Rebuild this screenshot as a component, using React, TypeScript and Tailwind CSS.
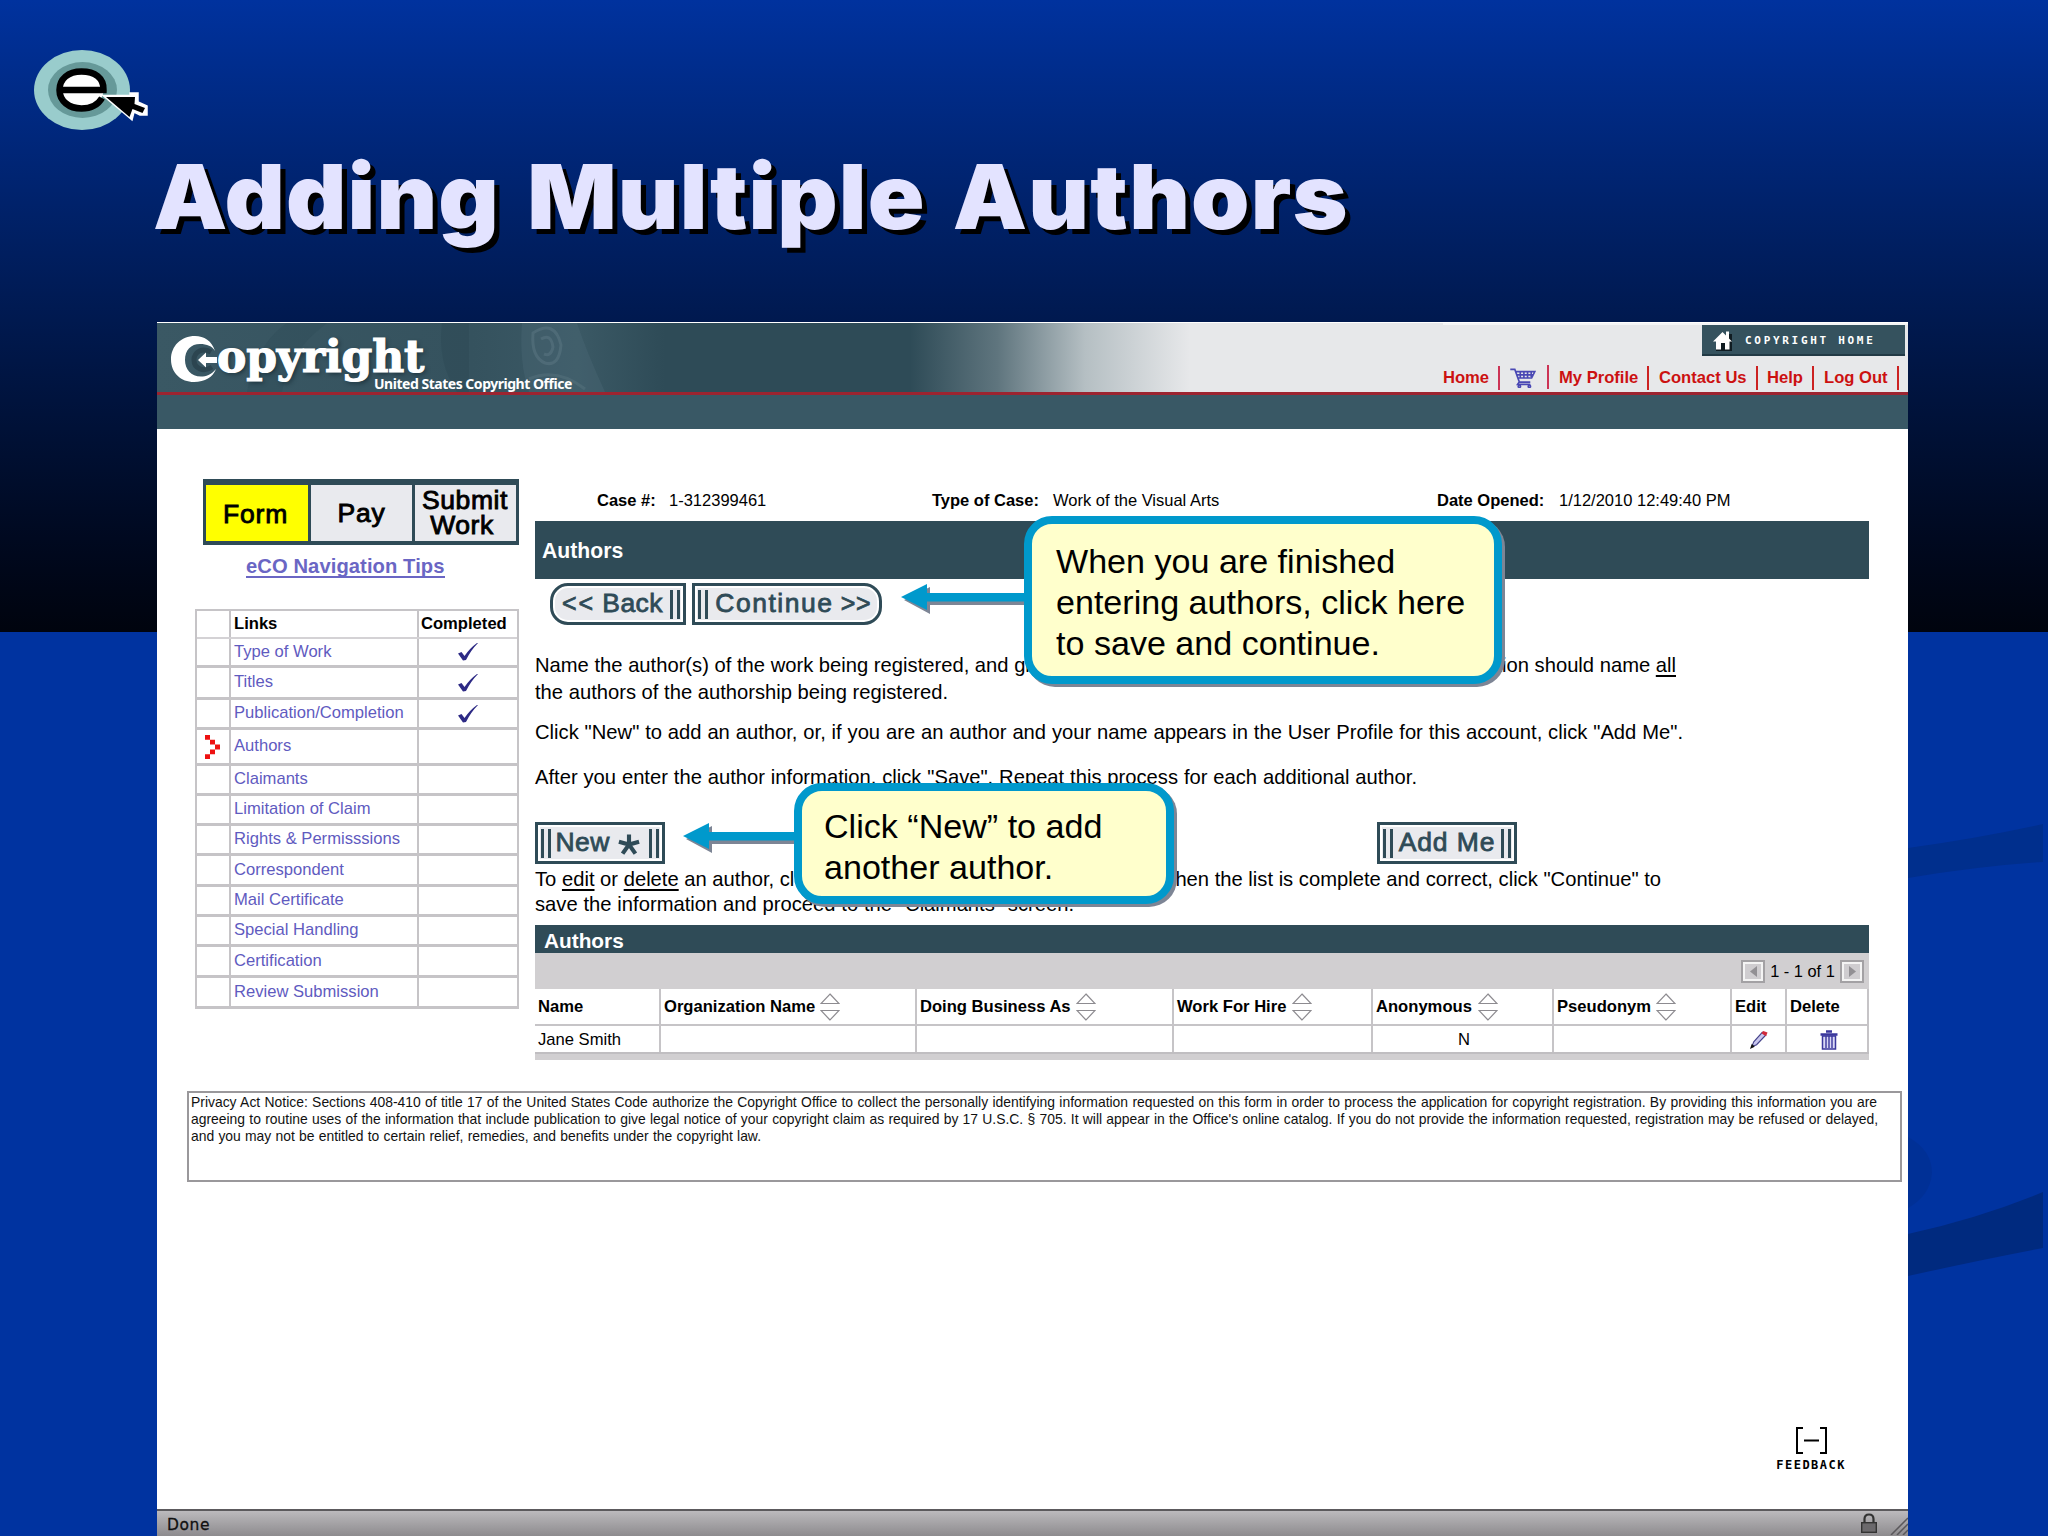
import type { ReactNode } from 'react'

const links = [
  { label: 'Type of Work', done: true, height: 'h-[29px]' },
  { label: 'Titles', done: true, height: 'h-[32px]' },
  { label: 'Publication/Completion', done: true, height: 'h-[30px]' },
  { label: 'Authors', current: true, height: 'h-[36px]' },
  { label: 'Claimants', height: 'h-[30px]' },
  { label: 'Limitation of Claim', height: 'h-[30px]' },
  { label: 'Rights & Permisssions', height: 'h-[30px]' },
  { label: 'Correspondent', height: 'h-[31px]' },
  { label: 'Mail Certificate', height: 'h-[30px]' },
  { label: 'Special Handling', height: 'h-[30px]' },
  { label: 'Certification', height: 'h-[31px]' },
  { label: 'Review Submission', height: 'h-[31px]' },
]

const columns = [
  { label: 'Name', width: 'w-[126px]', text: 'w-[44px]', value: 'Jane Smith' },
  { label: 'Organization Name', width: 'w-[256px]', text: 'w-[151px]', sortable: true },
  { label: 'Doing Business As', width: 'w-[257px]', text: 'w-[151px]', sortable: true },
  { label: 'Work For Hire', width: 'w-[199px]', text: 'w-[110px]', sortable: true },
  { label: 'Anonymous', width: 'w-[181px]', text: 'w-[97px]', sortable: true, value: 'N', center: true },
  { label: 'Pseudonym', width: 'w-[178px]', text: 'w-[94px]', sortable: true },
  { label: 'Edit', width: 'w-[55px]', text: 'w-[32px]', icon: 'edit' },
  { label: 'Delete', width: 'w-[82px]', text: 'w-[51px]', icon: 'delete' },
]

function Backdrop() {
  return (
    <svg className="absolute inset-0 h-full w-full" viewBox="0 0 2048 1536">
      <path d="M1908 848 Q1980 838 2043 824 V862 Q1980 866 1908 878Z" fill="#002f8d" />
      <path d="M1908 1137 Q1932 1150 1932 1173 Q1930 1196 1908 1208Z" fill="#003096" />
      <path d="M1908 1234 Q1980 1218 2043 1192 V1248 Q1980 1260 1908 1276Z" fill="#002a7f" />
    </svg>
  )
}

function EcoLogo() {
  return (
    <svg className="absolute top-[46px] left-[30px] h-[88px] w-[124px]" viewBox="30 46 124 88">
      <ellipse cx="82" cy="90" rx="48" ry="40" fill="#99cccc" />
      <ellipse cx="82.500" cy="90" rx="34.500" ry="28" fill="#669999" />
      <ellipse cx="81.500" cy="90" rx="22" ry="18.500" fill="#fff" />
      <path d="M60 90 H103.500 C104 78 95 71.500 81.500 71.500 C68 71.500 59.500 79 59.500 90 C59.500 101 69 108.500 81.500 108.500 C91 108.500 98 105 102 98" fill="none" stroke="#000" strokeWidth="6.500" />
      <path d="M103 95.500 L130 95.500 V93 H138 V102 L147 106 V115 H140 L134 112 L132 120 L125 114Z" fill="#fff" stroke="#fff" strokeWidth="1.500" />
      <path d="M106 97 H135 L134.500 104 L145 108 L142.500 113 L132.500 109 L129.500 117Z" fill="#000" />
    </svg>
  )
}

function HeaderPhoto() {
  return (
    <svg className="absolute top-0 left-0 h-[69px] w-[460px]" viewBox="0 0 460 69" fill="none">
      <path d="M90 69 Q100 20 130 0 H170 Q130 30 125 69Z" fill="#2f4d59" opacity="0.500" />
      <path d="M285 0 H312 V69 H300 Q280 40 285 0Z" fill="#2f4b57" opacity="0.600" />
      <path d="M365 0 H420 Q430 30 448 69 H372 Q362 40 365 0Z" fill="#4a6773" opacity="0.450" />
      <path d="M376 10 Q398 -4 404 22 Q402 44 388 40 Q374 34 376 10Z M384 16 Q394 10 396 24 Q394 34 387 31" stroke="#5c7883" strokeWidth="3" opacity="0.500" />
      <path d="M372 56 Q400 44 428 66" stroke="#5c7883" strokeWidth="3" opacity="0.400" />
    </svg>
  )
}

function CopyrightMark() {
  return (
    <div className="relative flex h-[69px] w-[500px] flex-col">
      <HeaderPhoto />
      <div className="relative flex h-[52px] items-start pl-[13px]">
        <svg className="mt-[12px] h-[50px] w-[50px] shrink-0" viewBox="0 0 50 50">
          <path d="M45 16 C42 6 34 1 25 1 C11 1 1 11 1 24.500 C1 38 11 47 24 47 C35 47 43 42 46 34 C41 40 36 41.500 31 41.500 C21 41.500 15 34 15 25 C15 15 21 9 30 9 C37 9 42 11 45 16Z" fill="#fff" />
          <path d="M41 17 C32 12 24 17 24 25 C24 33 33 38 42 32" fill="none" stroke="#2c4550" strokeWidth="5" />
          <path d="M28 25 L36 17.500 V22 H47 V28 H36 V32.500Z" fill="#fff" />
        </svg>
        <span className="-ml-[3px] pt-[2px] font-['DejaVu_Serif'] text-[44px] leading-[64px] font-bold tracking-[-0.2px] text-white [-webkit-text-stroke:1.2px_#fff] [text-shadow:2px_2px_4px_#1d333d]">
          opyright
        </span>
      </div>
      <span className="relative pl-[217px] font-['Noto_Sans'] text-[14px] leading-[17px] font-bold tracking-[-0.48px] whitespace-nowrap text-white">
        United States Copyright Office
      </span>
    </div>
  )
}

function Cart() {
  return (
    <svg className="h-[20px] w-[26px]" viewBox="0 0 28 22" fill="none" stroke="#4a48b4" strokeWidth="1.800">
      <path d="M0 1.500 H5 L10 15.500 H22 M6 4 H27 L23.500 11 H9 M7 7.500 H25 M11 4 V11 M15 4 V11 M19 4 V11 M23 4 V10 M10 15 L8 18 H22" />
      <circle cx="10" cy="20" r="1.300" />
      <circle cx="21" cy="20" r="1.300" />
    </svg>
  )
}

function Header() {
  return (
    <header>
      <div className="flex h-[69px] justify-between bg-[linear-gradient(90deg,#3a5864_0%,#35525e_18%,#3b5965_24%,#2e4b57_29%,#2e4b57_43%,#5f757e_48%,#b5bfc3_53%,#e7e8ea_59%)]">
        <CopyrightMark />
        <div className="flex flex-col items-end border-t-2 border-[#f4f5f6] pr-[3px]">
          <div className="flex h-[31px] w-[203px] items-center border-b-2 border-[#223a45] bg-[#35525e] pt-[2px] pl-[10px]">
            <svg className="h-[22px] w-[22px]" viewBox="0 0 22 22">
              <path d="M4 12 V21 H20 V4 H16 V6" fill="#101c22" />
              <path d="M1 11.500 L10.500 2 L14 5.500 V1.500 H17 V8.500 L20 11.500 H17.500 V19.500 H13 V13 H9 V19.500 H4 V11.500Z" fill="#fff" />
            </svg>
            <span className="pt-px pl-[11px] font-['DejaVu_Sans_Mono'] text-[11px] font-bold tracking-[2.7px] whitespace-nowrap text-white">
              COPYRIGHT HOME
            </span>
          </div>
          <nav className="flex h-[36px] items-center pt-[8px] pr-[6px] text-[16.600px] font-bold whitespace-nowrap text-[#cc1111]">
            <span className="w-[55px]">Home</span>
            <span className="h-[24px] w-[2px] bg-[#cc3355]" />
            <span className="w-[47px] pl-[10px]"><Cart /></span>
            <span className="mb-[3px] h-[24px] w-[2px] bg-[#cc3355]" />
            <span className="w-[98px] pl-[10px]">My Profile</span>
            <span className="h-[24px] w-[2px] bg-[#cc2222]" />
            <span className="w-[107px] pl-[10px]">Contact Us</span>
            <span className="h-[24px] w-[2px] bg-[#cc2222]" />
            <span className="w-[54px] pl-[9px]">Help</span>
            <span className="h-[24px] w-[2px] bg-[#cc2222]" />
            <span className="w-[83px] pl-[10px]">Log Out</span>
            <span className="h-[24px] w-[2px] bg-[#cc2222]" />
          </nav>
        </div>
      </div>
      <div className="h-[37px] border-t-[3px] border-[#9c2430] bg-[#395865]" />
    </header>
  )
}

function Sidebar() {
  return (
    <aside className="w-[348px] shrink-0 pt-[50px] pl-[38px]">
      <div className="ml-[8px] flex h-[66px] w-[316px] gap-[3px] border-x-[3px] border-t-[6px] border-b-[4px] border-[#2f4b57] bg-[#2f4b57] text-[26.500px] text-black [-webkit-text-stroke:0.9px_#000]">
        <div className="flex w-[102px] items-center justify-center bg-[#ffff00] pt-[4px] pr-[3px] tracking-[0.8px]">Form</div>
        <div className="flex w-[101px] items-center justify-center bg-[#e9eaee] pt-[2px] tracking-[0.8px]">Pay</div>
        <div className="flex flex-1 flex-col items-center bg-[#e9eaee] pt-[3px] leading-[25px]">
          <span className="pr-px tracking-[0.6px]">Submit</span>
          <span className="pr-[7px] tracking-[0.6px]">Work</span>
        </div>
      </div>
      <div className="flex h-[64px] items-start pt-[11px] pl-[51px]">
        <a className="border-b-2 border-[#6a66c4] text-[20.200px] leading-[20px] font-bold tracking-[0.080px] whitespace-nowrap text-[#6a66c4]">
          eCO Navigation Tips
        </a>
      </div>
      <div className="w-[324px] border-x-2 border-t-2 border-[#c6c4c7] text-[16.600px]">
        <div className="flex h-[28px] border-b-2 border-[#d4d2d5] font-bold">
          <div className="w-[34px] border-r-2 border-[#c6c4c7]" />
          <div className="flex w-[188px] items-center border-r-2 border-[#c6c4c7] pl-[3px]">Links</div>
          <div className="flex items-center pl-[2px]">Completed</div>
        </div>
        {links.map((link) => (
          <div key={link.label} className={`flex border-b-[3px] border-[#c6c4c7] ${link.height}`}>
            <div className="flex w-[34px] items-center border-r-2 border-[#c6c4c7] pl-[8px]">
              {link.current && (
                <svg className="h-[24px] w-[15px]" viewBox="0 0 15 24" fill="#ee1111">
                  <path d="M0 0H5V4.800H0ZM5 4.800H10V9.600H5ZM10 9.600H15V14.400H10ZM5 14.400H10V19.200H5ZM0 19.200H5V24H0Z" />
                </svg>
              )}
            </div>
            <div className="flex w-[188px] items-center border-r-2 border-[#c6c4c7] pl-[3px] whitespace-nowrap text-[#5f5bbf]">
              {link.label}
            </div>
            <div className="flex flex-1 items-center justify-center">
              {link.done && (
                <svg className="h-[18px] w-[20px]" viewBox="0 0 20 18">
                  <path d="M0 10.500 L3.500 9 L6.500 13 Q12 5 19 0 H20 Q13 7 8 17 L5 17.500Z" fill="#2d2a85" />
                </svg>
              )}
            </div>
          </div>
        ))}
      </div>
    </aside>
  )
}

function Bars() {
  return <span className="h-[29px] w-[10px] shrink-0 border-x-[3px] border-[#2f4b57]" />
}

function ImageButton({ className, children }: { className: string; children: ReactNode }) {
  return (
    <button
      className={`flex h-[42px] items-center border-[3px] border-[#2f4b57] bg-[#e9eaee] text-[26.500px] whitespace-nowrap text-[#2f4b57] shadow-[inset_0_0_0_2px_#fff] [-webkit-text-stroke:0.8px_#2f4b57] ${className}`}
    >
      {children}
    </button>
  )
}

function Sorter() {
  return (
    <svg className="ml-[5px] h-[28px] w-[20px] shrink-0" viewBox="0 0 20 28" fill="#fff" stroke="#8d8b90" strokeWidth="1.200">
      <path d="M10 1 L19 10.500 H1Z M10 27 L1 17.500 H19Z" />
    </svg>
  )
}

function Pencil() {
  return (
    <svg className="mr-[3px] h-[20px] w-[19px]" viewBox="0 0 20 20">
      <path d="M3 17 L5 12 L14 2 L17.500 5 L8 15Z" fill="#c9c7ee" stroke="#45438a" strokeWidth="1.200" />
      <path d="M13 3 L15 0.500 L19.500 2 L18 6Z" fill="#d22a3a" />
      <path d="M1 19.500 L3 14 L6 17Z" fill="#111" />
    </svg>
  )
}

function Trash() {
  return (
    <svg className="h-[20px] w-[18px]" viewBox="0 0 18 20">
      <path d="M6 1.500 H12 M0.500 4.500 H17.500" stroke="#3a379c" strokeWidth="2.500" />
      <path d="M2.500 6 H15.500 V19 H2.500Z" fill="#d9d8f5" stroke="#3a379c" strokeWidth="1.500" />
      <path d="M6 6 V18 M9 6 V18 M12 6 V18" stroke="#3a379c" strokeWidth="1.400" />
    </svg>
  )
}

function Pager() {
  return (
    <div className="flex h-[36px] items-center justify-end bg-[#d1cfd1] pt-px pr-[5px]">
      <span className="flex h-[23px] w-[24px] items-center justify-center border-2 border-[#a3a1a4] bg-[#cfcdd0] shadow-[inset_0_0_0_2px_#f4f4f4]">
        <svg className="h-[11px] w-[7px]" viewBox="0 0 7 11"><path d="M7 0V11L0 5.500Z" fill="#929094" /></svg>
      </span>
      <span className="w-[75px] text-center text-[16.400px]">1 - 1 of 1</span>
      <span className="flex h-[23px] w-[24px] items-center justify-center border-2 border-[#a3a1a4] bg-[#cfcdd0] shadow-[inset_0_0_0_2px_#f4f4f4]">
        <svg className="h-[11px] w-[7px]" viewBox="0 0 7 11"><path d="M0 0V11L7 5.500Z" fill="#929094" /></svg>
      </span>
    </div>
  )
}

function AuthorsTable() {
  return (
    <section className="mt-[8px] h-[135px] bg-[#d1cfd1]">
      <div className="h-[28px] bg-[#2f4b57] pt-px pl-[9px] text-[20.800px] leading-[30px] font-bold text-white">Authors</div>
      <Pager />
      <div className="flex h-[37px] border-b-2 border-[#c6c4c7] bg-white text-[16.600px] font-bold">
        {columns.map((col) => (
          <div key={col.label} className={`flex shrink-0 items-center border-r-2 border-[#c6c4c7] pl-[3px] ${col.width}`}>
            <span className={`pt-[2px] whitespace-nowrap ${col.text}`}>{col.label}</span>
            {col.sortable && <Sorter />}
          </div>
        ))}
      </div>
      <div className="flex h-[28px] border-b-2 border-[#c0bec1] bg-white text-[16.600px]">
        {columns.map((col) => (
          <div
            key={col.label}
            className={`flex shrink-0 items-center border-r-2 border-[#c6c4c7] pt-[2px] pl-[3px] ${col.width} ${col.center || col.icon ? 'justify-center' : ''}`}
          >
            {col.value}
            {col.icon === 'edit' && <Pencil />}
            {col.icon === 'delete' && <Trash />}
          </div>
        ))}
      </div>
    </section>
  )
}

function Callout({ className, children }: { className: string; children: ReactNode }) {
  return (
    <div
      className={`absolute rounded-[28px] border-[8px] border-[#0099cc] bg-[#ffffcc] text-[34.100px] leading-[40.800px] whitespace-nowrap text-black shadow-[3px_3px_0_#7d8595] ${className}`}
    >
      {children}
    </div>
  )
}

function Arrow({ className }: { className: string }) {
  return (
    <svg className={`absolute h-[32px] w-[130px] ${className}`} viewBox="0 0 130 32">
      <path d="M3 16 L29 3 V12 H130 V21 H29 V30Z" fill="#7d8595" />
      <path d="M0 13 L26 0 V9 H130 V17.500 H26 V26Z" fill="#0099cc" />
    </svg>
  )
}

function Main() {
  return (
    <main className="w-[1334px] pt-[51px] text-black">
      <div className="flex h-[41px] items-center pl-[62px] text-[16.500px] whitespace-nowrap">
        <b className="w-[72px]">Case #:</b>
        <span className="w-[263px]">1-312399461</span>
        <b className="w-[121px]">Type of Case:</b>
        <span className="w-[384px]">Work of the Visual Arts</span>
        <b className="w-[122px]">Date Opened:</b>
        <span>1/12/2010 12:49:40 PM</span>
      </div>
      <h2 className="flex h-[58px] items-center bg-[#2f4b57] pt-[2px] pl-[7px] text-[21.200px] font-bold text-white">Authors</h2>
      <div className="flex gap-[6px] pt-[4px] pl-[15px]">
        <ImageButton className="w-[136px] justify-between rounded-l-[18px] pr-[3px] pl-[9px]">
          <span className="text-[25px] tracking-[2px]">&lt;&lt;</span>
          <span className="tracking-[0.4px]">Back</span>
          <Bars />
        </ImageButton>
        <ImageButton className="w-[190px] justify-between rounded-r-[18px] pr-[8px] pl-[3px]">
          <Bars />
          <span className="tracking-[1.5px]">Continue</span>
          <span className="text-[25px] tracking-[0.5px]">&gt;&gt;</span>
        </ImageButton>
      </div>
      <div className="pt-[27px] text-[20.200px] leading-[27px] whitespace-nowrap">
        <div className="flex w-[1141px] justify-between">
          <span>Name the author(s) of the work being registered, and gi</span>
          <span>tion should name <u className="underline-offset-[3px]">all</u></span>
        </div>
        <p>the authors of the authorship being registered.</p>
        <p className="w-[1148px] pt-[13px] [text-align-last:justify]">
          Click "New" to add an author, or, if you are an author and your name appears in the User Profile for this account, click "Add Me".
        </p>
        <p className="w-[882px] pt-[18px] [text-align-last:justify]">
          After you enter the author information, click "Save". Repeat this process for each additional author.
        </p>
      </div>
      <div className="flex pt-[31px]">
        <ImageButton className="w-[130px] justify-between px-[3px]">
          <Bars />
          <span className="-ml-[4px] tracking-[0.5px]">New</span>
          <svg className="mt-[2px] h-[21px] w-[22px]" viewBox="0 0 24 22" stroke="#2f4b57" strokeWidth="4.500">
            <path d="M12 0V11M1 8L12 11L23 8M5 21L12 11L19 21" fill="none" />
          </svg>
          <Bars />
        </ImageButton>
        <ImageButton className="ml-[712px] w-[140px] justify-between px-[3px]">
          <Bars />
          <span className="tracking-[0.9px]">Add Me</span>
          <Bars />
        </ImageButton>
      </div>
      <div className="pt-[3px] text-[20.200px] leading-[25px] whitespace-nowrap">
        <div className="flex w-[1126px] justify-between">
          <span>To <u className="underline-offset-[3px]">edit</u> or <u className="underline-offset-[3px]">delete</u> an author, cl</span>
          <span>hen the list is complete and correct, click "Continue" to</span>
        </div>
        <p className="w-[539px] [text-align-last:justify]">save the information and proceed to the "Claimants" screen.</p>
      </div>
      <AuthorsTable />
    </main>
  )
}

function PrivacyNotice() {
  return (
    <div className="mt-[31px] ml-[30px] h-[91px] w-[1715px] border-2 border-[#9a989b] pt-px pl-[2px] text-[13.900px] leading-[17.200px] whitespace-nowrap text-[#111]">
      <p className="w-[1686px] [text-align-last:justify]">
        Privacy Act Notice: Sections 408-410 of title 17 of the United States Code authorize the Copyright Office to collect the personally identifying information requested on this form in order to process the application for copyright registration. By providing this information you are
      </p>
      <p className="w-[1687px] [text-align-last:justify]">
        agreeing to routine uses of the information that include publication to give legal notice of your copyright claim as required by 17 U.S.C. § 705. It will appear in the Office's online catalog. If you do not provide the information requested, registration may be refused or delayed,
      </p>
      <p className="w-[570px] [text-align-last:justify]">
        and you may not be entitled to certain relief, remedies, and benefits under the copyright law.
      </p>
    </div>
  )
}

function StatusBar() {
  return (
    <footer className="flex h-[27px] items-center justify-between border-t-2 border-[#5c5a5d] bg-gradient-to-b from-[#bcbabd] to-[#8d8b8e] pl-[10px]">
      <span className="pt-[4px] font-['DejaVu_Sans'] text-[15.500px] tracking-[0.6px] text-[#111] [-webkit-text-stroke:0.3px_#111]">Done</span>
      <div className="flex items-end">
        <svg className="mb-[2px] h-[20px] w-[16px]" viewBox="0 0 16 20">
          <path d="M3.500 10 V6 Q3.500 1.500 8 1.500 Q12.500 1.500 12.500 6 V10" fill="none" stroke="#333" strokeWidth="2.200" />
          <rect x="0.700" y="9.700" width="14.600" height="9.600" fill="#6b696c" stroke="#333" strokeWidth="1.400" />
        </svg>
        <svg className="ml-[13px] h-[18px] w-[18px]" viewBox="0 0 18 18" stroke="#5a585b" strokeWidth="1.500">
          <path d="M1 18 L18 1 M7 18 L18 7 M13 18 L18 13" />
        </svg>
      </div>
    </footer>
  )
}

export default function App() {
  return (
    <div className="relative h-[1536px] w-[2048px] overflow-hidden bg-[#0033a0] font-['Liberation_Sans',sans-serif]">
      <div className="absolute inset-x-0 top-0 h-[632px] bg-gradient-to-b from-[#00329e] to-[#00040e]" />
      <Backdrop />
      <EcoLogo />
      <h1 className="relative h-[322px] w-[1600px] origin-left scale-x-[1.04] pt-[143px] pl-[147px] font-['Inter'] text-[90px] leading-[108px] font-black tracking-[1.1px] [word-spacing:7px] whitespace-nowrap text-[#e3e3ff] [text-shadow:5px_5px_0_#000]">
        Adding Multiple Authors
      </h1>
      <div className="relative ml-[157px] flex h-[1214px] w-[1751px] flex-col bg-white pt-px">
        <Header />
        <div className="flex h-[631px] gap-[30px]">
          <Sidebar />
          <Main />
        </div>
        <PrivacyNotice />
        <div className="mt-auto mr-[62px] mb-[36px] flex flex-col items-center self-end">
          <svg className="h-[27px] w-[31px]" viewBox="0 0 31 27" fill="none" stroke="#000" strokeWidth="2">
            <path d="M7 1H1V26H7M24 1H30V26H24M8 13.500H23" />
          </svg>
          <span className="mt-[3px] font-['DejaVu_Sans_Mono'] text-[12px] leading-[16px] font-bold tracking-[1.5px] text-black">FEEDBACK</span>
        </div>
        <StatusBar />
      </div>

      <Arrow className="top-[584px] left-[901px]" />
      <Callout className="top-[516px] left-[1024px] h-[168px] w-[478px] pt-[17px] pl-[24px]">
        When you are finished
        <br />
        entering authors, click here
        <br />
        to save and continue.
      </Callout>
      <Arrow className="top-[823px] left-[683px]" />
      <Callout className="top-[783px] left-[794px] h-[121px] w-[380px] pt-[15px] pl-[22px]">
        Click “New” to add
        <br />
        another author.
      </Callout>
    </div>
  )
}
